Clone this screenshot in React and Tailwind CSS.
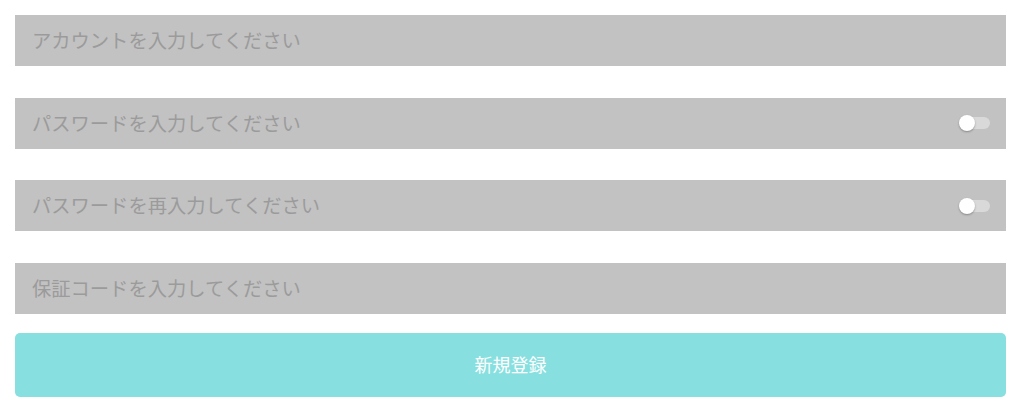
import React from "react";

function Toggle() {
  return (
    <div className="relative w-[31px] h-[16px] flex items-center shrink-0">
      <div className="w-[31px] h-[12px] rounded-full bg-[#d9d9d9]" />
      <div className="absolute left-0 top-0 w-[16px] h-[16px] rounded-full bg-white shadow-[0_1px_2px_rgba(0,0,0,0.3)]" />
    </div>
  );
}

function Field({ placeholder, toggle }) {
  return (
    <div className="h-[51px] bg-[#c2c2c2] flex items-center pl-[17px] pr-[16px]">
      <input
        className="flex-1 bg-transparent outline-none text-[19.3px] text-[#333] placeholder:text-[#9b9b9b] font-['Noto_Sans_CJK_JP',sans-serif]"
        placeholder={placeholder}
      />
      {toggle && <Toggle />}
    </div>
  );
}

export default function App() {
  return (
    <div className="w-[1024px] h-[404px] bg-white px-[15px] pt-[15px] font-['Noto_Sans_CJK_JP',sans-serif]">
      <div className="w-[991px] flex flex-col gap-[31.5px]">
        <Field placeholder="アカウントを入力してください" />
        <Field placeholder="パスワードを入力してください" toggle />
        <Field placeholder="パスワードを再入力してください" toggle />
        <Field placeholder="保証コードを入力してください" />
      </div>
      <button className="mt-[19px] w-[991px] h-[64px] rounded-[5px] bg-[#87dfe0] text-white text-[18px] font-normal flex items-center justify-center">
        新規登録
      </button>
    </div>
  );
}
